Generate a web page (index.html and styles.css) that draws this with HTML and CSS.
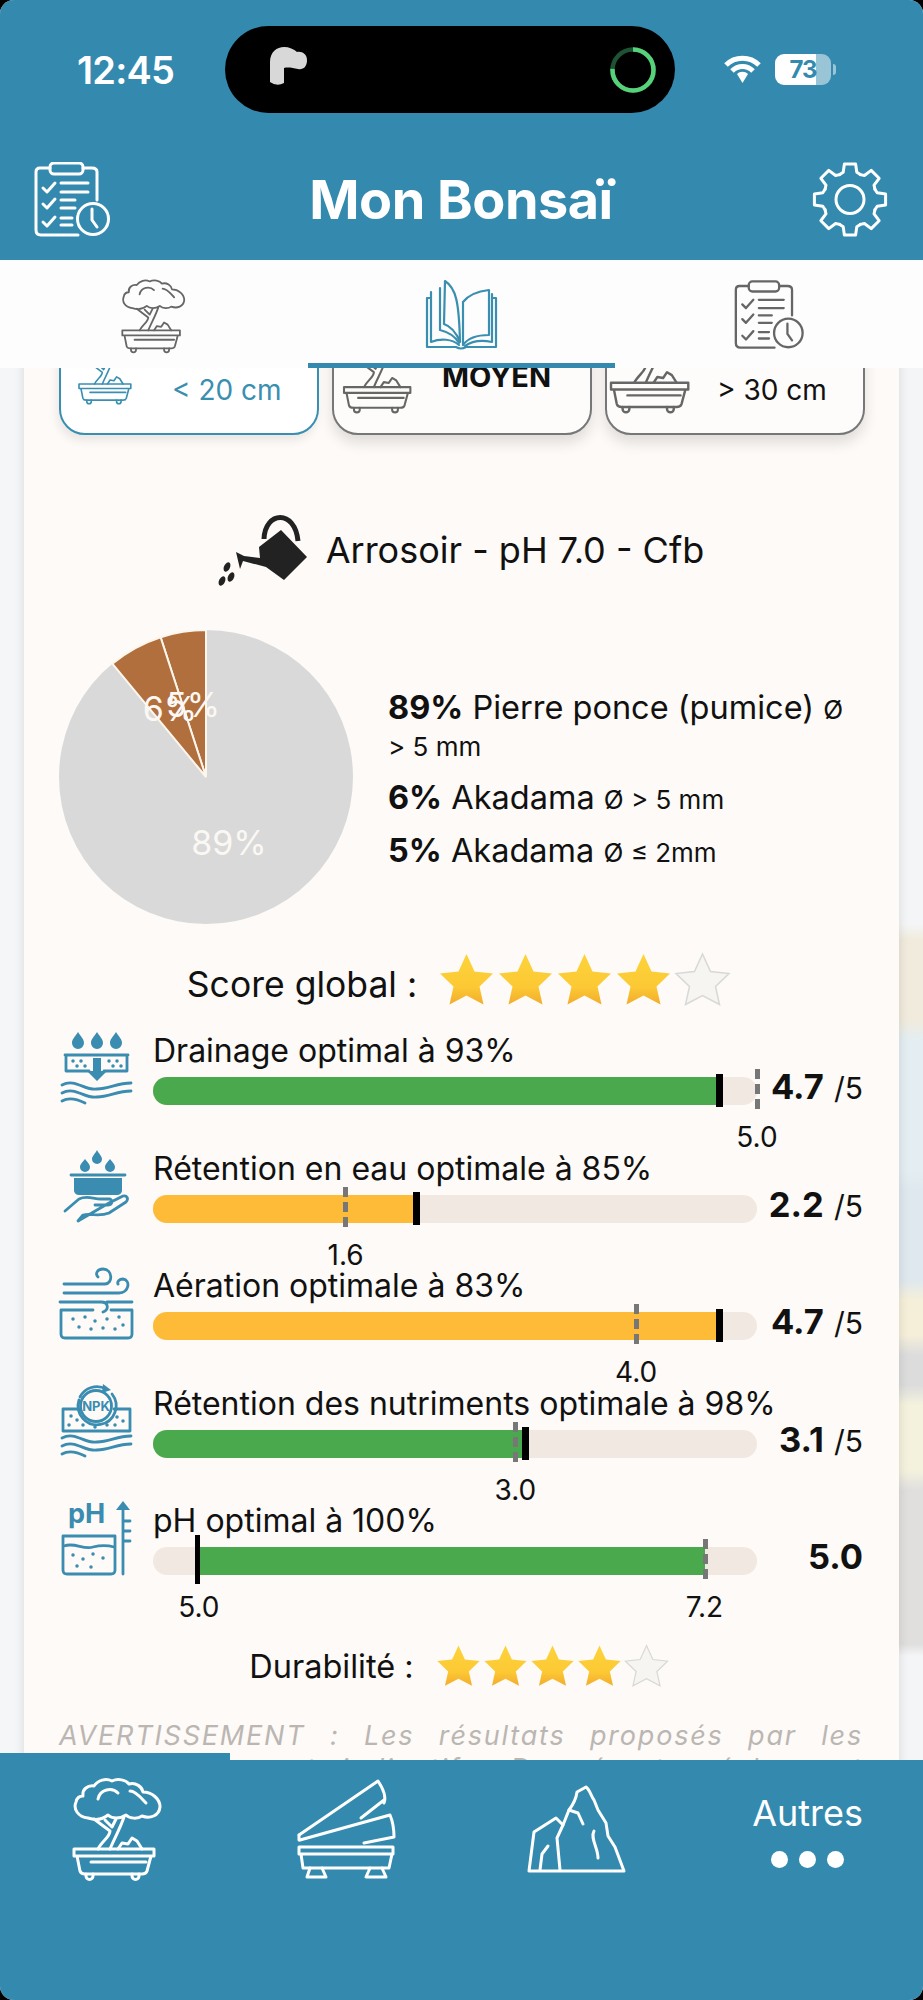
FILE: index.html
```html
<!DOCTYPE html>
<html lang="fr">
<head>
    <meta charset="UTF-8">
    <meta name="viewport" content="width=device-width, initial-scale=1.0">
    <title>Mon Bonsaï</title>
    <link rel="stylesheet" href="styles.css">
</head>
<body>

    <!-- Icones reutilisees -->
    <svg class="sprites" aria-hidden="true">
        <defs>
            <linearGradient id="or" x1="0" y1="0" x2="0" y2="1">
                <stop offset="0" stop-color="#fdd33a"/>
                <stop offset="0.65" stop-color="#fcc934"/>
                <stop offset="1" stop-color="#f2ac2c"/>
            </linearGradient>
            <symbol id="bonsai" viewBox="0 0 88 100" overflow="visible">
                <path d="M14 39C4 38-1 30 2 23C3 18 7 17 9 17C8 10 14 6 20 7C24 1 32-1 38 2C44-1 52 1 55 5C62 3 68 8 69 13C78 13 86 20 86 28C85 37 76 40 68 37C64 40 56 40 52 36C46 40 38 40 34 36C28 41 20 41 14 39Z"/>
                <path d="M24 20C26 10 38 8 44 14M56 12C62 12 68 20 72 24"/>
                <path d="M20 40L36 52C36 58 28 62 24 70M50 38C46 50 40 60 36 70M31 41L38 48L42 40"/>
                <path d="M44 70L48 64L54 65L58 59L63 62L68 70"/>
                <path d="M0 70H80V77H0ZM3 77L6 92Q7 95 11 95H68Q72 95 73 92L77 77M17 83H72"/>
                <path d="M12 95V97A3 3 0 0 0 19 97V95M58 95V97A3 3 0 0 0 65 97V95"/>
            </symbol>
            <symbol id="liste" viewBox="0 0 76 75">
                <path d="M16 6H6Q2 6 2 10V68Q2 73 7 73H44M49 6H58Q63 6 63 10V38"/>
                <rect x="16" y="1" width="33" height="11" rx="4"/>
                <path d="M9 26L13 30L21 21M9 42L13 46L21 37M9 60L13 64L21 55"/>
                <path d="M27 21H54M27 30H54M27 38H41M27 46H41M27 56H38M27 63H38"/>
                <circle cx="59" cy="57" r="15.5"/>
                <path d="M58 47V58L63 65"/>
            </symbol>
            <symbol id="etoile" viewBox="0 0 59 54">
                <path d="M29.5 2L37.5 19.5L56 21.5L42.5 34.5L46.5 52.5L29.5 43.5L12.500 52.500L16.500 34.500L3 21.500L21.500 19.500Z"/>
            </symbol>
            <path id="dent" d="M-10.300-24.900L-6.800-27.200L-5.600-35.600H5.600L6.800-27.200L10.300-24.900"/>
            <path id="vagues" d="M3 54C16 47 26 60 38 58C50 58 58 52 72 52M3 62C16 55 26 68 38 66C50 66 58 60 72 60M3 70C10 66 18 68 26 72"/>
        </defs>
    </svg>

    <div class="ecran">

        <header class="entete">
            <div class="statut">
                <span class="heure">12:45</span>
                <div class="ilot">
                    <svg class="ecouteur" width="40" height="40" viewBox="0 0 40 40">
                        <path class="ecouteur-corps" d="M1 36V16C1 6 8 1 15 1C20 1 25 3 28 6C33 5 38 8 38 14C38 21 34 24 29 23C24 22 19 21 15 22V37Q8 41 1 36Z"/>
                    </svg>
                    <svg class="anneau" width="46" height="46" viewBox="0 0 46 46">
                        <circle class="anneau-fond" cx="23" cy="23" r="20.500"/>
                        <circle class="anneau-plein" cx="23" cy="23" r="20.500" pathLength="100" stroke-dasharray="76 24" transform="rotate(-90 23 23)"/>
                    </svg>
                </div>
                <div class="etat">
                    <svg class="wifi" width="39" height="29" viewBox="0 0 39 29">
                        <path d="M3 10C12 1 27 1 36 10M9 16C15 10 24 10 30 16"/>
                        <path class="wifi-point" d="M14 19C17 16 22 16 25 19L19.500 28Z"/>
                    </svg>
                    <div class="batterie">73</div>
                </div>
            </div>
            <div class="titre-ligne">
                <svg class="ico ico-titre" width="76" height="75"><use href="#liste"/></svg>
                <h1>Mon Bonsaï</h1>
                <svg class="ico ico-titre" width="76" height="75" viewBox="0 0 76 75">
                    <g transform="translate(38 37.500)">
                        <use href="#dent"/>
                        <use href="#dent" transform="rotate(45)"/>
                        <use href="#dent" transform="rotate(90)"/>
                        <use href="#dent" transform="rotate(135)"/>
                        <use href="#dent" transform="rotate(180)"/>
                        <use href="#dent" transform="rotate(225)"/>
                        <use href="#dent" transform="rotate(270)"/>
                        <use href="#dent" transform="rotate(315)"/>
                        <circle r="14"/>
                    </g>
                </svg>
            </div>
        </header>

        <nav class="onglets">
            <div class="onglet"><svg class="ico ico-gris" width="64" height="72"><use href="#bonsai"/></svg></div>
            <div class="onglet onglet-actif">
                <svg class="ico ico-bleu" width="71" height="70" viewBox="0 0 71 70">
                    <path d="M5 18H1V67H30Q35 70 40 67H70V18H66"/>
                    <path d="M5 12V62C15 58 26 59 33 65"/>
                    <path d="M19 1C30 8 33 22 34 62C30 52 24 46 18 44Z"/>
                    <path d="M14 8V50C22 52 29 56 33 63"/>
                    <path d="M37 22C44 13 54 11 63 10V55C52 55 42 58 37 65Z"/>
                    <path d="M66 14V62C56 60 46 61 39 66"/>
                </svg>
            </div>
            <div class="onglet"><svg class="ico ico-gris" width="70" height="70"><use href="#liste"/></svg></div>
        </nav>

        <main class="contenu">
            <div class="carte">

                <div class="tailles">
                    <div class="taille taille-active">
                        <svg class="ico pot-petit" width="57" height="66"><use href="#bonsai"/></svg>
                        <span>&lt; 20 cm</span>
                    </div>
                    <div class="taille">
                        <svg class="ico pot-moyen" width="73" height="85"><use href="#bonsai"/></svg>
                        <strong class="taille-moyen">MOYEN</strong>
                    </div>
                    <div class="taille">
                        <svg class="ico pot-grand" width="85" height="99"><use href="#bonsai"/></svg>
                        <span>&gt; 30 cm</span>
                    </div>
                </div>

                <div class="recette">
                    <svg width="110" height="90" viewBox="0 0 110 90">
                        <path class="arrosoir-anse" d="M55 34C56 6 86 4 89 36"/>
                        <path class="arrosoir" d="M50 42L72 25L98 52L75 75L57 62L34 56L31 64L27 47L35 51L51 53Z"/>
                        <ellipse class="arrosoir" cx="18" cy="62" rx="3" ry="5" transform="rotate(25 18 62)"/>
                        <ellipse class="arrosoir" cx="13" cy="76" rx="3" ry="5" transform="rotate(25 13 76)"/>
                        <ellipse class="arrosoir" cx="22" cy="72" rx="3" ry="5" transform="rotate(25 22 72)"/>
                    </svg>
                    <h2>Arrosoir - pH 7.0 - Cfb</h2>
                </div>

                <div class="melange">
                    <svg class="camembert" width="294" height="294" viewBox="0 0 294 294">
                        <circle class="part-grise" cx="147" cy="147" r="147"/>
                        <path class="part-brune" d="M147 147L147 0A147 147 0 0 0 101.600 7.200Z"/>
                        <path class="part-brune" d="M147 147L101.600 7.200A147 147 0 0 0 53.300 33.700Z"/>
                        <text x="111" y="91">6%</text>
                        <text x="134" y="87">5%</text>
                        <text x="170" y="225">89%</text>
                    </svg>
                    <div class="legende">
                        <p><b>89%</b> Pierre ponce (pumice) <small>Ø &gt;&nbsp;5&nbsp;mm</small></p>
                        <p><b>6%</b> Akadama <small>Ø &gt; 5 mm</small></p>
                        <p><b>5%</b> Akadama <small>Ø ≤ 2mm</small></p>
                    </div>
                </div>

                <div class="note">
                    <span class="note-texte">Score global :</span>
                    <div class="etoiles">
                        <svg class="etoile" width="59" height="54"><use href="#etoile"/></svg>
                        <svg class="etoile" width="59" height="54"><use href="#etoile"/></svg>
                        <svg class="etoile" width="59" height="54"><use href="#etoile"/></svg>
                        <svg class="etoile" width="59" height="54"><use href="#etoile"/></svg>
                        <svg class="etoile etoile-vide" width="59" height="54"><use href="#etoile"/></svg>
                    </div>
                </div>

                <div class="mesures">

                    <div class="mesure">
                        <svg class="ico-mesure" width="74" height="74" viewBox="0 0 74 74">
                            <path class="plein" d="M19 1C22 6 25 8 25 12A6 6 0 0 1 13 12C13 8 16 6 19 1ZM38 1C41 6 44 8 44 12A6 6 0 0 1 32 12C32 8 35 6 38 1ZM57 1C60 6 63 8 63 12A6 6 0 0 1 51 12C51 8 54 6 57 1Z"/>
                            <path d="M6 24H69M7 24V40H30M45 40H68V24"/>
                            <path class="plein" d="M34 27H42V40H48L38 50L28 40H34Z"/>
                            <path class="points" d="M14 30h.01M22 30h.01M18 35h.01M26 35h.01M50 30h.01M58 30h.01M54 35h.01M62 35h.01"/>
                            <use href="#vagues"/>
                        </svg>
                        <div class="mesure-corps">
                            <div class="mesure-titre">Drainage optimal à 93%</div>
                            <div class="mesure-ligne">
                                <div class="jauge">
                                    <div class="remplissage vert" style="width: 93.8%"></div>
                                    <div class="repere-noir" style="left: 93.8%"></div>
                                    <div class="repere-gris" style="left: 100%"></div>
                                    <span class="repere-texte" style="left: 100%">5.0</span>
                                </div>
                                <div class="valeur"><b>4.7</b> <small>/5</small></div>
                            </div>
                        </div>
                    </div>

                    <div class="mesure">
                        <svg class="ico-mesure" width="74" height="74" viewBox="0 0 74 74">
                            <path class="plein" d="M26 10C28 13 31 15 31 18A5 5 0 0 1 21 18C21 15 24 13 26 10ZM38 1C40 5 43 7 43 10A5 5 0 0 1 33 10C33 7 36 5 38 1ZM51 10C53 13 56 15 56 18A5 5 0 0 1 46 18C46 15 49 13 51 10Z"/>
                            <path d="M12 26H66"/>
                            <path class="plein" d="M15 29H63V42Q62 46 58 46H20Q16 46 15 42Z"/>
                            <path d="M6 62L20 50C28 46 34 50 42 50H50C54 50 54 56 49 56H36M50 54L64 47C68 46 70 50 67 53L50 64C40 68 32 64 24 66L19 72Z"/>
                        </svg>
                        <div class="mesure-corps">
                            <div class="mesure-titre">Rétention en eau optimale à 85%</div>
                            <div class="mesure-ligne">
                                <div class="jauge">
                                    <div class="remplissage orange" style="width: 43.7%"></div>
                                    <div class="repere-noir" style="left: 43.7%"></div>
                                    <div class="repere-gris" style="left: 31.9%"></div>
                                    <span class="repere-texte" style="left: 31.9%">1.6</span>
                                </div>
                                <div class="valeur"><b>2.2</b> <small>/5</small></div>
                            </div>
                        </div>
                    </div>

                    <div class="mesure">
                        <svg class="ico-mesure" width="74" height="74" viewBox="0 0 74 74">
                            <path d="M5 18H46C54 18 54 3 44 3C38 3 36 8 39 11M5 27H60C70 27 72 14 64 13C60 13 58 16 59 18M1 36H42C50 36 50 44 44 46M48 36H73"/>
                            <path d="M2 44V68Q2 72 6 72H69Q73 72 73 68V44H52M2 44H34"/>
                            <path class="points" d="M14 53h.01M26 51h.01M36 55h.01M48 53h.01M60 51h.01M20 61h.01M32 63h.01M44 62h.01M56 63h.01M64 59h.01"/>
                        </svg>
                        <div class="mesure-corps">
                            <div class="mesure-titre">Aération optimale à 83%</div>
                            <div class="mesure-ligne">
                                <div class="jauge">
                                    <div class="remplissage orange" style="width: 93.8%"></div>
                                    <div class="repere-noir" style="left: 93.8%"></div>
                                    <div class="repere-gris" style="left: 80%"></div>
                                    <span class="repere-texte" style="left: 80%">4.0</span>
                                </div>
                                <div class="valeur"><b>4.7</b> <small>/5</small></div>
                            </div>
                        </div>
                    </div>

                    <div class="mesure">
                        <svg class="ico-mesure" width="74" height="74" viewBox="0 0 74 74">
                            <path d="M21 13A19 19 0 0 1 47 5M53 10A19 19 0 1 1 20 16"/>
                            <path class="plein" d="M44 0L52 6L43 9Z"/>
                            <circle cx="37" cy="22" r="15.500"/>
                            <text class="txt-npk" x="37" y="27">NPK</text>
                            <path d="M20 25H4V47H71V25H55"/>
                            <path class="points" d="M12 32h.01M18 36h.01M10 41h.01M24 41h.01M36 43h.01M48 41h.01M58 33h.01M64 37h.01M56 41h.01"/>
                            <use href="#vagues"/>
                        </svg>
                        <div class="mesure-corps">
                            <div class="mesure-titre">Rétention des nutriments optimale à 98%</div>
                            <div class="mesure-ligne">
                                <div class="jauge">
                                    <div class="remplissage vert" style="width: 61.6%"></div>
                                    <div class="repere-noir" style="left: 61.6%"></div>
                                    <div class="repere-gris" style="left: 60%"></div>
                                    <span class="repere-texte" style="left: 60%">3.0</span>
                                </div>
                                <div class="valeur"><b>3.1</b> <small>/5</small></div>
                            </div>
                        </div>
                    </div>

                    <div class="mesure">
                        <svg class="ico-mesure" width="74" height="74" viewBox="0 0 74 74">
                            <text class="txt-ph" x="9" y="22">pH</text>
                            <path d="M4 35H56V69Q56 73 52 73H8Q4 73 4 69ZM5 45C16 41 24 49 34 46C42 44 48 44 55 46"/>
                            <path class="points" d="M14 54h.01M24 58h.01M34 53h.01M44 57h.01M18 65h.01M32 66h.01"/>
                            <path d="M64 73V6M64 20H71M64 30H71M64 40H71"/>
                            <path class="plein" d="M64 0L71 9H57Z"/>
                        </svg>
                        <div class="mesure-corps">
                            <div class="mesure-titre">pH optimal à 100%</div>
                            <div class="mesure-ligne">
                                <div class="jauge">
                                    <div class="remplissage vert remplissage-ph" style="margin-left: 7.4%; width: 84%"></div>
                                    <div class="repere-noir repere-ph" style="left: 7.4%"></div>
                                    <div class="repere-gris" style="left: 91.4%"></div>
                                    <span class="repere-texte" style="left: 7.6%">5.0</span>
                                    <span class="repere-texte" style="left: 91.3%">7.2</span>
                                </div>
                                <div class="valeur"><b>5.0</b></div>
                            </div>
                        </div>
                    </div>

                </div>

                <div class="note note-durabilite">
                    <span class="note-texte">Durabilité :</span>
                    <div class="etoiles">
                        <svg class="etoile" width="47" height="43"><use href="#etoile"/></svg>
                        <svg class="etoile" width="47" height="43"><use href="#etoile"/></svg>
                        <svg class="etoile" width="47" height="43"><use href="#etoile"/></svg>
                        <svg class="etoile" width="47" height="43"><use href="#etoile"/></svg>
                        <svg class="etoile etoile-vide" width="47" height="43"><use href="#etoile"/></svg>
                    </div>
                </div>

                <p class="avertissement">AVERTISSEMENT : Les résultats proposés par les algorithmes sont indicatifs. Des écarts réels sont possibles selon les conditions de culture et la qualité des substrats utilisés.</p>

            </div>
        </main>

        <footer class="pied">
            <div class="pied-item pied-arbre"><svg class="ico ico-pied" width="88" height="100"><use href="#bonsai"/></svg></div>
            <div class="pied-item">
                <svg class="ico ico-pied" width="96" height="98" viewBox="0 0 96 98">
                    <path d="M1 55L80 1C86 10 88 18 86 23M86 20L63 38"/>
                    <path d="M2 60L92 35C95 42 96 50 96 57L66 63"/>
                    <path d="M1 55V60"/>
                    <path d="M1 67H95V74H1ZM3 74L5 88H91L94 74"/>
                    <path d="M12 88L9 97H28L24 88M72 88L68 97H88L84 88"/>
                </svg>
            </div>
            <div class="pied-item">
                <svg class="ico ico-pied" width="97" height="86" viewBox="0 0 97 86">
                    <path d="M1 85H96L87 61L80 50L78 37L70 24L66 14C63 10 62 4 58 1L49 6C48 14 44 20 41 24L35 39L28 32L6 46Z"/>
                    <path d="M35 39L29 52L32 84M41 24L50 27L55 38M66 45C62 52 70 62 70 72M12 84L14 68L20 60"/>
                </svg>
            </div>
            <div class="pied-item pied-autres">
                <span>Autres</span>
                <div class="points-menu"><i></i><i></i><i></i></div>
            </div>
        </footer>

    </div>

</body>
</html>
```

FILE: styles.css
```css
html, body {
    margin: 0;
    padding: 0;
    background-color: #000;
}
body {
    font-family: Inter, "Liberation Sans", sans-serif;
    color: #111;
}
.sprites {
    position: absolute;
    width: 0;
    height: 0;
}

.ecran {
    width: 923px;
    height: 2000px;
    display: flex;
    flex-direction: column;
    overflow: hidden;
    border-radius: 14px;
    background-color: #f5f6f7;
}

/* Icones au trait */
.ico {
    fill: none;
    stroke: currentColor;
    stroke-width: 2.5;
    stroke-linecap: round;
    stroke-linejoin: round;
    flex: none;
    overflow: visible;
}
.ico-gris {
    color: #666;
}
.ico-bleu {
    color: #3a8fb1;
    stroke-width: 2.2;
}

/* Entete */
.entete {
    height: 260px;
    flex: none;
    background-color: #338aae;
    color: white;
}
.statut {
    display: flex;
    align-items: center;
    padding-top: 26px;
    height: 87px;
}
.heure {
    width: 147px;
    padding-left: 77px;
    margin-right: 1px;
    font-size: 38px;
    font-weight: 600;
    letter-spacing: -0.8px;
    white-space: nowrap;
}
.ilot {
    width: 450px;
    height: 87px;
    border-radius: 44px;
    background-color: #000;
    display: flex;
    align-items: center;
    justify-content: space-between;
    padding: 0 19px 0 44px;
    box-sizing: border-box;
}
.ecouteur-corps {
    fill: #d8d8d8;
}
.ecouteur {
    margin-top: -8px;
}
.anneau {
    fill: none;
    stroke-width: 4.5;
}
.anneau-fond {
    stroke: #1d5234;
}
.anneau-plein {
    stroke: #55d27a;
}
.etat {
    display: flex;
    align-items: center;
    gap: 13px;
    padding-left: 48px;
}
.wifi {
    fill: none;
    stroke: white;
    stroke-width: 5;
}
.wifi-point {
    fill: white;
    stroke: none;
}
.batterie {
    position: relative;
    width: 56px;
    height: 31px;
    border-radius: 9px;
    background: linear-gradient(90deg, #fff 73%, rgba(255, 255, 255, 0.5) 73%);
    color: #338aae;
    font-size: 24px;
    font-weight: 700;
    line-height: 31px;
    text-align: center;
    letter-spacing: -1px;
}
.batterie::after {
    content: "";
    position: absolute;
    top: 10px;
    right: -5px;
    width: 3px;
    height: 11px;
    border-radius: 0 3px 3px 0;
    background-color: rgba(255, 255, 255, 0.5);
}
.titre-ligne {
    display: flex;
    align-items: center;
    justify-content: space-between;
    margin-top: 49px;
    padding: 0 35px 0 34px;
    height: 75px;
}
h1 {
    margin: 0;
    font-size: 54px;
    font-weight: 700;
    letter-spacing: -0.5px;
}
.ico-titre {
    stroke-width: 3;
}

/* Onglets */
.onglets {
    height: 108px;
    flex: none;
    display: grid;
    grid-template-columns: 308px 307px 308px;
    background-color: #fdfdfd;
    position: relative;
    z-index: 2;
}
.onglet {
    display: flex;
    justify-content: center;
    padding-top: 20px;
    box-sizing: border-box;
}
.onglet-actif {
    border-bottom: 5px solid #338aae;
}

/* Contenu defilant */
.contenu {
    flex: 1;
    min-height: 0;
    overflow: hidden;
    background:
        linear-gradient(#f4f5f6 556px, #f0ebdc 572px 652px, #e4eef2 672px 802px, #dfe8ee 822px 912px,
            #f5efd9 932px 967px, #dcdcdc 987px 1017px, #f4f2dd 1037px 1102px, #e0dfde 1122px 1276px, #f4f5f7 1288px)
        right / 24px 100% no-repeat,
        #f5f6f7;
}
.carte {
    margin: -63px 24px 0;
    padding: 0 36px 0 35px;
    background-color: #fdfaf7;
    box-shadow: 0 0 10px rgba(0, 0, 0, 0.12);
}

.tailles {
    display: grid;
    grid-template-columns: repeat(3, 260px);
    gap: 13px;
    margin-right: -2px;
}
.taille {
    height: 130px;
    box-sizing: border-box;
    border: 2px solid #777;
    border-radius: 0 0 26px 26px;
    background-color: #fdfcfb;
    box-shadow: 0 8px 14px rgba(0, 0, 0, 0.12);
    display: flex;
    align-items: flex-start;
    font-size: 28px;
    color: #111;
    white-space: nowrap;
}
.taille span {
    margin-top: 66px;
}
.taille-active {
    border-color: #3a8fb1;
    color: #3a8fb1;
    background-color: #fff;
    box-shadow: -2px 6px 10px rgba(0, 0, 0, 0.08);
}
.pot-petit {
    margin: 31px 36px 0 18px;
}
.pot-moyen {
    margin: 21px 25px 0 10px;
    color: #666;
}
.pot-grand {
    margin: 7px 21px 0 4px;
    color: #666;
}
.taille-moyen {
    margin-top: 52px;
    font-size: 29px;
}

.recette {
    display: flex;
    align-items: center;
    justify-content: center;
    gap: 7px;
    height: 90px;
    margin-top: 70px;
    padding-right: 9px;
}
.arrosoir {
    fill: #222;
}
.arrosoir-anse {
    fill: none;
    stroke: #222;
    stroke-width: 5;
}
h2 {
    margin: 0;
    font-size: 36px;
    font-weight: 400;
}

.melange {
    display: flex;
    align-items: center;
    gap: 35px;
    margin-top: 35px;
}
.camembert {
    flex: none;
}
.camembert text {
    font-size: 34px;
    fill: #fbf8f4;
    text-anchor: middle;
}
.part-grise {
    fill: #d9d9d9;
}
.part-brune {
    fill: #b26f3e;
    stroke: #fdf6ec;
    stroke-width: 2;
}
.legende {
    font-size: 32.5px;
    line-height: 37px;
    padding-top: 4px;
}
.legende p {
    margin: 0 0 16px;
}
.legende p:last-child {
    margin-bottom: 0;
}
.legende small {
    font-size: 26px;
    line-height: 1;
}

.note {
    display: flex;
    align-items: center;
    justify-content: center;
    gap: 20px;
    margin-top: 28px;
    padding-right: 3px;
}
.note-texte {
    font-size: 35.5px;
    padding-top: 10px;
}
.etoiles {
    display: flex;
}
.etoile {
    fill: url(#or);
    stroke: none;
}
.etoile-vide {
    fill: #f6f5f2;
    stroke: #d8d8d8;
    stroke-width: 1.5;
}

/* Mesures */
.mesures {
    margin-top: 27px;
}
.mesure {
    display: flex;
    gap: 20px;
    height: 117.5px;
}
.ico-mesure {
    flex: none;
    margin-top: -2px;
    fill: none;
    stroke: #3a8cb0;
    stroke-width: 2.8;
    stroke-linecap: round;
    stroke-linejoin: round;
    overflow: visible;
}
.plein {
    fill: #3a8cb0;
    stroke: none;
}
.points {
    stroke-width: 3.5;
}
.txt-npk {
    font-size: 13px;
    font-weight: 700;
    fill: #3a8cb0;
    stroke: none;
    text-anchor: middle;
}
.txt-ph {
    font-size: 27px;
    font-weight: 700;
    fill: #3a8cb0;
    stroke: none;
}
.mesure-corps {
    flex: 1;
}
.mesure-titre {
    font-size: 32px;
    line-height: 36px;
    white-space: nowrap;
}
.mesure-ligne {
    display: flex;
    margin-top: 8px;
}
.jauge {
    position: relative;
    flex: none;
    width: 604px;
    height: 28px;
    border-radius: 14px;
    background-color: #f1e9e1;
}
.remplissage {
    height: 100%;
}
.vert {
    background-color: #4aa94c;
    border-radius: 14px 0 0 14px;
}
.orange {
    background-color: #fdbb37;
    border-radius: 14px 0 0 14px;
}
.remplissage-ph {
    border-radius: 0;
}
.repere-noir {
    position: absolute;
    top: -3px;
    width: 7px;
    height: 33px;
    margin-left: -3.5px;
    background-color: #000;
}
.repere-ph {
    top: -12px;
    height: 49px;
    width: 5px;
    margin-left: -2.5px;
}
.repere-gris {
    position: absolute;
    top: -8px;
    width: 5px;
    height: 45px;
    margin-left: -2.5px;
    background: repeating-linear-gradient(#777 0 10px, transparent 10px 15px);
}
.repere-texte {
    position: absolute;
    top: 45px;
    transform: translateX(-50%);
    font-size: 28px;
    line-height: 30px;
}
.valeur {
    flex: 1;
    text-align: right;
    font-size: 29px;
    line-height: 28px;
    margin-top: -4px;
    white-space: nowrap;
}
.valeur b {
    font-size: 34.5px;
}
.valeur small {
    margin-left: 2px;
    font-size: 30px;
}

.note-durabilite {
    gap: 21px;
    margin-top: 23px;
}
.note-durabilite .note-texte {
    font-size: 32.5px;
    padding-top: 3px;
}

.avertissement {
    margin: 32px 0 0;
    font-size: 27px;
    line-height: 33px;
    font-style: italic;
    letter-spacing: 1.8px;
    text-align: justify;
    color: #bbb6b2;
}

/* Barre du bas */
.pied {
    position: relative;
    height: 240px;
    flex: none;
    box-sizing: border-box;
    padding-top: 19px;
    display: grid;
    grid-template-columns: repeat(4, 1fr);
    align-items: start;
    background-color: #338aae;
    color: white;
}
.pied::before {
    content: "";
    position: absolute;
    top: -7px;
    left: 0;
    width: 230px;
    height: 7px;
    background-color: #338aae;
}
.pied-item {
    height: 100px;
    display: flex;
    align-items: center;
    justify-content: center;
}
.pied-arbre {
    padding-left: 5px;
}
.ico-pied {
    stroke-width: 3;
}
.pied-autres {
    flex-direction: column;
    gap: 16px;
    font-size: 36px;
}
.points-menu {
    display: flex;
    gap: 11px;
}
.points-menu i {
    width: 17px;
    height: 17px;
    border-radius: 50%;
    background-color: white;
}
```
